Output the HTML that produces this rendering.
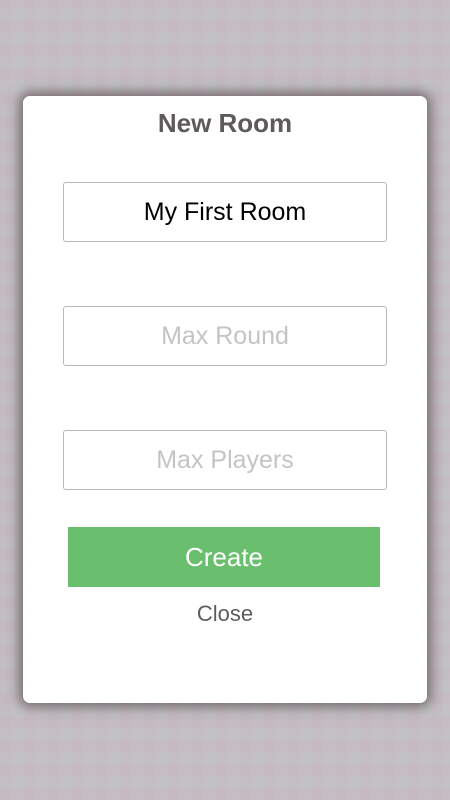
<!DOCTYPE html>
<html><head><meta charset="utf-8"><style>
html,body{margin:0;padding:0}
body{width:450px;height:800px;position:relative;overflow:hidden;font-family:"Liberation Sans",sans-serif;
background-color:#c3c1c3;
background-image:repeating-linear-gradient(90deg,rgba(200,170,185,.18) 0 11px,rgba(0,0,0,0) 11px 24px),repeating-linear-gradient(0deg,rgba(200,170,185,.18) 0 11px,rgba(0,0,0,0) 11px 24px);}
.card{position:absolute;left:23px;top:96px;width:404px;height:607px;background:#fff;border-radius:7px;box-shadow:0 0 12px 4px rgba(60,50,55,.6)}
h1{position:absolute;top:108px;left:0;width:450px;text-align:center;margin:0;font-size:26px;font-weight:bold;color:#5e5a5c}
.in{position:absolute;left:63px;width:322px;height:58px;border:1px solid #b8b8b8;border-radius:3px;background:#fff;text-align:center;line-height:58px;font-size:25px;color:#c4c4c6}
.btn{position:absolute;left:68px;top:527px;width:312px;height:60px;background:#69bf6d;color:#fff;text-align:center;line-height:60px;font-size:26px}
.close{position:absolute;top:601px;left:0;width:450px;text-align:center;font-size:22px;color:#5f5c5e}
</style></head><body>
<div class="card"></div>
<h1>New Room</h1>
<div class="in" style="top:182px;color:#000">My First Room</div>
<div class="in" style="top:306px">Max Round</div>
<div class="in" style="top:430px">Max Players</div>
<div class="btn">Create</div>
<div class="close">Close</div>
</body></html>
